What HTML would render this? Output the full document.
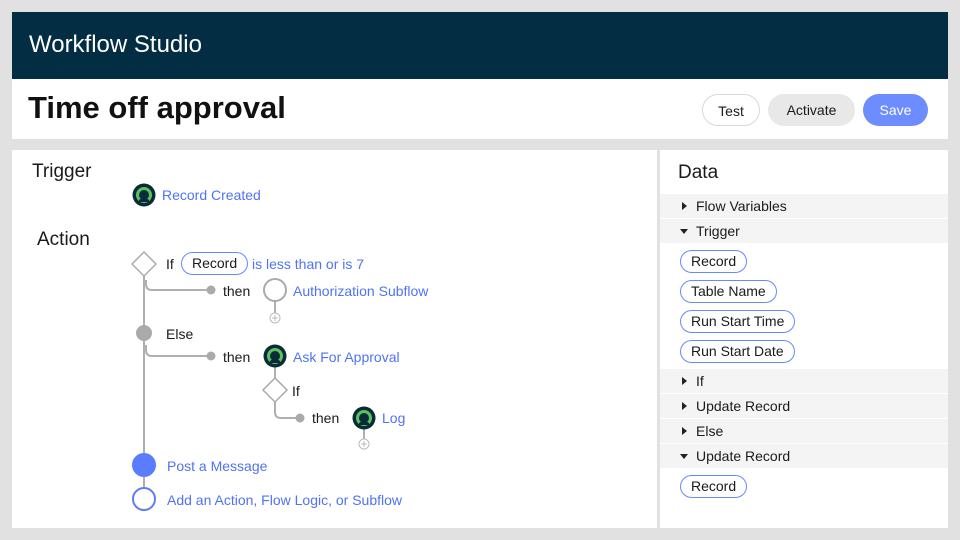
<!DOCTYPE html>
<html><head><meta charset="utf-8"><style>
*{margin:0;padding:0;box-sizing:border-box}
body{width:960px;height:540px;background:#e1e1e1;font-family:"Liberation Sans",sans-serif;position:relative;overflow:hidden;color:#1a1a1a}
.a{position:absolute;white-space:nowrap}
.hdr{left:12px;top:12px;width:936px;height:67px;background:#032d42;color:#fff;font-size:24px;padding:19px 0 0 17px}
.title{left:12px;top:79px;width:936px;height:60px;background:#fff}
.btn{position:absolute;top:94px;height:32px;border-radius:16px;font-size:14px;text-align:center;line-height:32px}
.lp{left:12px;top:150px;width:645px;height:378px;background:#fff}
.rp{left:660px;top:150px;width:288px;height:378px;background:#fff}
.row{position:absolute;left:0;width:288px;height:24px;background:#f4f4f4;font-size:14px;line-height:24px;padding-left:36px}
.tri{position:absolute;left:22px;top:8px;width:0;height:0;border-left:5px solid #222;border-top:4px solid transparent;border-bottom:4px solid transparent}
.tri.d{left:20px;top:10px;border-top:5px solid #222;border-left:4px solid transparent;border-right:4px solid transparent;border-bottom:0}
.pill{position:absolute;left:20px;height:23px;border:1.2px solid #6a88ff;border-radius:12px;font-size:14px;line-height:21px;padding:0 10px}
.t{font-size:14px}
.b{color:#4f73f5}
</style></head><body>
<div class="a hdr">Workflow Studio</div>
<div class="a title"><div class="a" style="left:16px;top:11px;font-size:31px;font-weight:bold;color:#111">Time off approval</div></div>
<div class="btn" style="left:702px;width:58px;border:1px solid #d8d8d8;background:#fff">Test</div>
<div class="btn" style="left:768px;width:87px;background:#e8e8e8">Activate</div>
<div class="btn" style="left:863px;width:65px;background:#6d8cff;color:#fff">Save</div>
<div class="a lp"></div>
<div class="a rp">
<div class="a" style="left:18px;top:12px;font-size:19px">Data</div>
<div class="row" style="top:44px"><span class="tri"></span>Flow Variables</div>
<div class="row" style="top:69px"><span class="tri d"></span>Trigger</div>
<div class="pill" style="top:100px">Record</div>
<div class="pill" style="top:130px">Table Name</div>
<div class="pill" style="top:160px">Run Start Time</div>
<div class="pill" style="top:190px">Run Start Date</div>
<div class="row" style="top:219px"><span class="tri"></span>If</div>
<div class="row" style="top:244px"><span class="tri"></span>Update Record</div>
<div class="row" style="top:269px"><span class="tri"></span>Else</div>
<div class="row" style="top:294px"><span class="tri d"></span>Update Record</div>
<div class="pill" style="top:325px">Record</div>
</div>
<svg class="a" style="left:0;top:0" width="960" height="540">
<defs><g id="ic"><circle r="11.5" fill="#0b2b38"/><circle r="8" fill="#5cc25f"/><circle r="5" fill="#0b2b38"/><path d="M-5 5 Q0 1 5 5 L5 7 L-5 7Z" fill="#0b2b38"/></g></defs>
<g stroke="#b0b0b0" stroke-width="2" fill="none">
<path d="M144 276 V465"/>
<path d="M146 280 V284 Q146 290 152 290 H211"/>
<path d="M146 345 V350 Q146 356 152 356 H211"/>
<path d="M275 301 V313"/>
<path d="M364 429 V439"/>
<path d="M275 367 V378"/>
<path d="M275 402 V412 Q275 418 281 418 H300"/>
<path d="M144 477 V487"/>
</g>
<path d="M144 252 L156 264 L144 276 L132 264Z" fill="#fff" stroke="#aaa" stroke-width="1.5"/>
<path d="M275 378 L287 390 L275 402 L263 390Z" fill="#fff" stroke="#aaa" stroke-width="1.5"/>
<circle cx="211" cy="290" r="4.5" fill="#aaa"/><circle cx="211" cy="356" r="4.5" fill="#aaa"/><circle cx="300" cy="418" r="4.5" fill="#aaa"/>
<circle cx="144" cy="333" r="8" fill="#aaa"/>
<circle cx="275" cy="290" r="11" fill="#fff" stroke="#aaa" stroke-width="2"/>
<g fill="#fff" stroke="#bbb" stroke-width="1"><circle cx="275" cy="318" r="5"/><circle cx="364" cy="444" r="5"/></g>
<g stroke="#bbb" stroke-width="1"><path d="M272 318h6M275 315v6M361 444h6M364 441v6"/></g>
<use href="#ic" x="144" y="195"/><use href="#ic" x="275" y="356"/><use href="#ic" x="364" y="418"/>
<circle cx="144" cy="465" r="12" fill="#5a7cff"/>
<circle cx="144" cy="499" r="11" fill="#fff" stroke="#5a7cff" stroke-width="2"/>
</svg>
<div class="a" style="left:32px;top:161px;font-size:19px">Trigger</div>
<div class="a" style="left:37px;top:229px;font-size:19px">Action</div>
<div class="a t b" style="left:162px;top:187px">Record Created</div>
<div class="a t" style="left:166px;top:256px">If</div>
<div class="a t" style="left:181px;top:252px;height:23px;border:1.2px solid #6a88ff;border-radius:12px;padding:0 10px;line-height:21px">Record</div>
<div class="a t b" style="left:252px;top:256px">is less than or is 7</div>
<div class="a t" style="left:223px;top:283px">then</div>
<div class="a t b" style="left:293px;top:283px">Authorization Subflow</div>
<div class="a t" style="left:166px;top:326px">Else</div>
<div class="a t" style="left:223px;top:349px">then</div>
<div class="a t b" style="left:293px;top:349px">Ask For Approval</div>
<div class="a t" style="left:292px;top:383px">If</div>
<div class="a t" style="left:312px;top:410px">then</div>
<div class="a t b" style="left:382px;top:410px">Log</div>
<div class="a t b" style="left:167px;top:458px">Post a Message</div>
<div class="a t b" style="left:167px;top:492px">Add an Action, Flow Logic, or Subflow</div>
</body></html>
